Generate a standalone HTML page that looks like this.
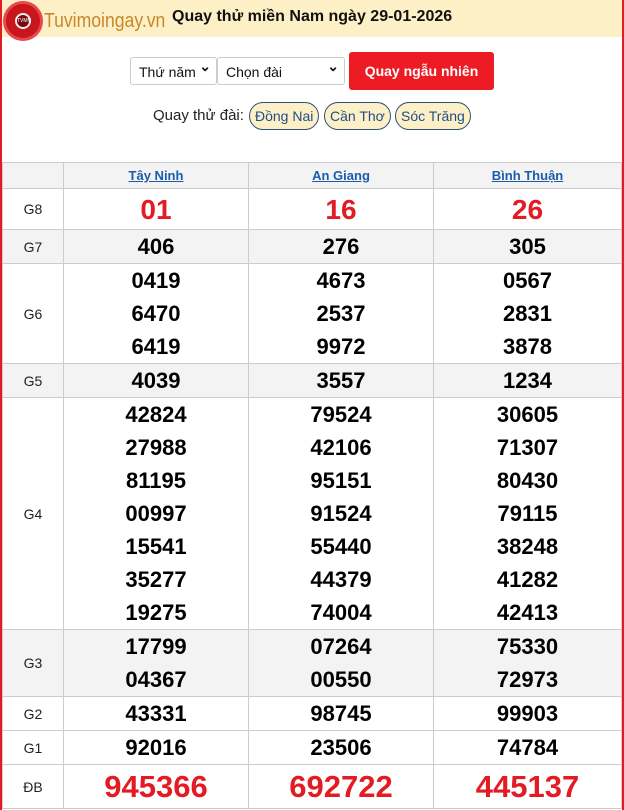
<!DOCTYPE html><html><head><meta charset="utf-8"><style>
*{box-sizing:border-box;margin:0;padding:0}
body{width:624px;height:810px;background:#fff;font-family:"Liberation Sans",Arial,sans-serif;position:relative;overflow:hidden;border-left:2px solid #e31b23;border-right:2px solid #e31b23}
.hdr{position:absolute;left:0;top:0;width:620px;height:37px;background:#fdf0c6}
.logo{position:absolute;left:1px;top:1px;width:40px;height:40px;border-radius:50%;background:#c8161d;border:3px solid #e8474d}
.logo i{position:absolute;left:9px;top:9px;width:16px;height:16px;border-radius:50%;background:#7a0a0e;border:2px solid #eee;font-size:5px;color:#fff;font-style:normal;text-align:center;line-height:12px}
.site{position:absolute;left:42px;top:10px;font-size:20px;color:#c7882a;transform:scaleX(0.88);transform-origin:left}
.title{position:absolute;left:170px;top:8px;font-size:16px;font-weight:bold;color:#111}
.sel{position:absolute;top:57px;height:28px;border:1px solid #ccc;border-radius:3px;background:#fff;font-size:14px;padding:6px 8px;color:#111}
.sel:after{content:"⌄";position:absolute;right:5px;top:0px;font-size:14px;font-weight:bold}
.btn{position:absolute;left:347px;top:52px;width:145px;height:38px;background:#ed1c24;border-radius:3px;color:#fff;font-weight:bold;font-size:14px;text-align:center;line-height:38px}
.qt{position:absolute;left:151px;top:107px;font-size:15px;color:#222}
.chip{position:absolute;top:102px;height:28px;border:1px solid #2a4f7a;border-radius:14px;background:#fdf0c6;color:#1d4e8a;font-size:14px;line-height:26px;padding:0 5px}
table{position:absolute;left:0;top:162px;width:620px;border-collapse:collapse}
td{border:1px solid #ccc;text-align:center;vertical-align:middle}
td.l{width:61px;font-size:14px;color:#222}
th{border:1px solid #ccc;height:26px;font-size:13px;font-weight:bold;color:#1a5cab;text-decoration:underline;background:#f3f3f3}
tr.g td{background:#f3f3f3}
td.n{font-weight:bold;font-size:22px;line-height:33px;color:#000}
td.r{color:#e31b23;font-size:28px}
td.d{color:#e31b23;font-size:31px;line-height:43px}
</style></head><body>
<div class="hdr"></div>
<div class="logo"><i>TVMN</i></div>
<div class="site">Tuvimoingay.vn</div>
<div class="title">Quay thử miền Nam ngày 29-01-2026</div>
<div class="sel" style="left:128px;width:87px">Thứ năm</div>
<div class="sel" style="left:215px;width:128px">Chọn đài</div>
<div class="btn">Quay ngẫu nhiên</div>
<div class="qt">Quay thử đài:</div>
<div class="chip" style="left:247px">Đồng Nai</div>
<div class="chip" style="left:322px">Cần Thơ</div>
<div class="chip" style="left:393px">Sóc Trăng</div>
<table>
<tr><th style="width:61px;text-decoration:none"></th><th style="width:185px">Tây Ninh</th><th style="width:185px">An Giang</th><th>Bình Thuận</th></tr>
<tr style="height:41px"><td class="l">G8</td><td class="n r">01</td><td class="n r">16</td><td class="n r">26</td></tr>
<tr class="g" style="height:34px"><td class="l">G7</td><td class="n">406</td><td class="n">276</td><td class="n">305</td></tr>
<tr style="height:100px"><td class="l">G6</td><td class="n">0419<br>6470<br>6419</td><td class="n">4673<br>2537<br>9972</td><td class="n">0567<br>2831<br>3878</td></tr>
<tr class="g" style="height:34px"><td class="l">G5</td><td class="n">4039</td><td class="n">3557</td><td class="n">1234</td></tr>
<tr style="height:232px"><td class="l">G4</td><td class="n">42824<br>27988<br>81195<br>00997<br>15541<br>35277<br>19275</td><td class="n">79524<br>42106<br>95151<br>91524<br>55440<br>44379<br>74004</td><td class="n">30605<br>71307<br>80430<br>79115<br>38248<br>41282<br>42413</td></tr>
<tr class="g" style="height:67px"><td class="l">G3</td><td class="n">17799<br>04367</td><td class="n">07264<br>00550</td><td class="n">75330<br>72973</td></tr>
<tr style="height:34px"><td class="l">G2</td><td class="n">43331</td><td class="n">98745</td><td class="n">99903</td></tr>
<tr style="height:34px"><td class="l">G1</td><td class="n">92016</td><td class="n">23506</td><td class="n">74784</td></tr>
<tr style="height:44px"><td class="l">ĐB</td><td class="n d">945366</td><td class="n d">692722</td><td class="n d">445137</td></tr>
</table>
</body></html>
